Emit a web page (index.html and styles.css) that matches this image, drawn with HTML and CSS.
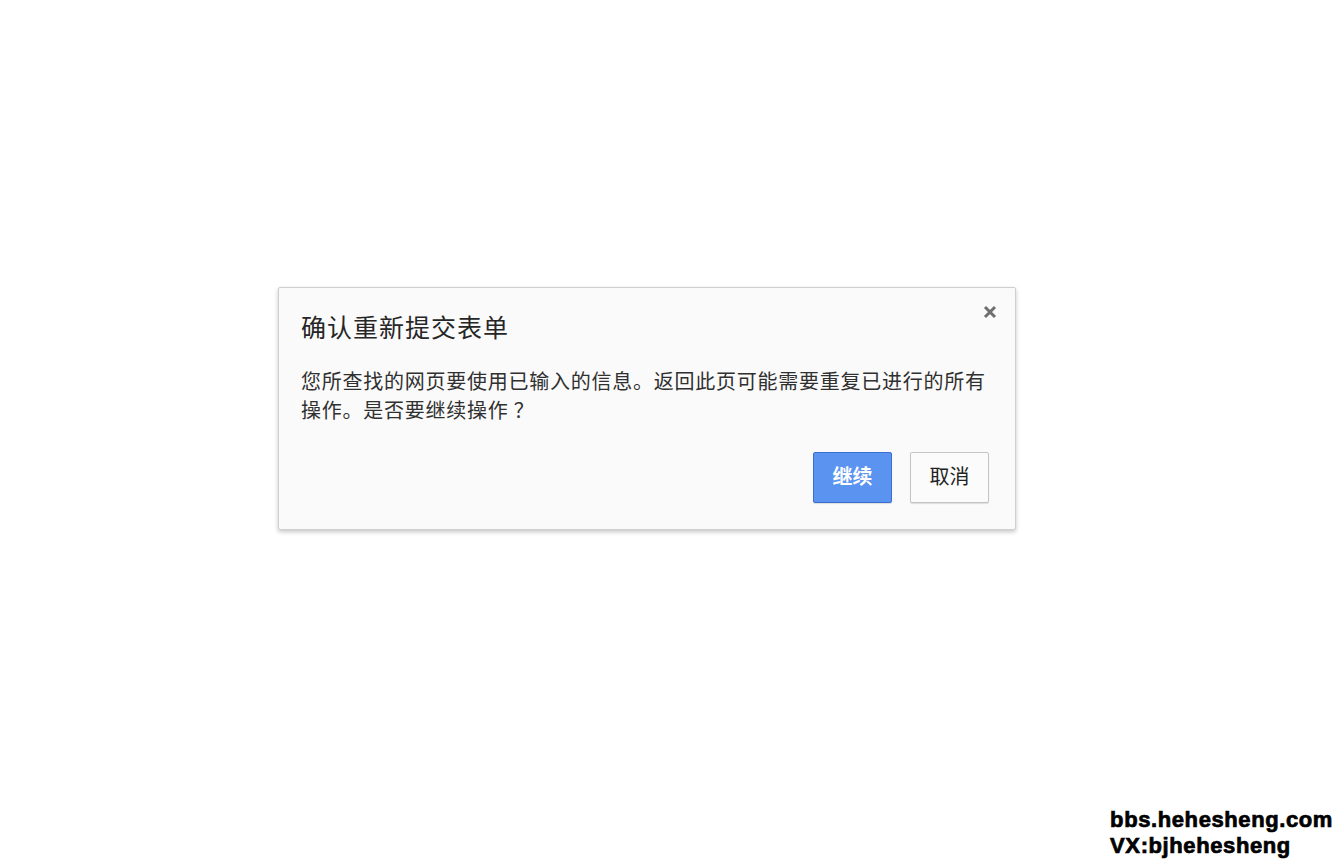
FILE: index.html
```html
<!DOCTYPE html>
<html>
<head>
  <title>确认重新提交表单</title>
  <meta charset="utf-8">
  <link rel="stylesheet" href="styles.css">
</head>
<body>
  <div class="page">
    <div class="dialog">
      <button class="close-btn" aria-label="关闭">
        <svg width="14" height="14" viewBox="0 0 14 14">
          <path d="M2 2 L12 12 M12 2 L2 12" stroke="#6f6f6f" stroke-width="3" stroke-linecap="butt" fill="none"/>
        </svg>
      </button>
      <h1 class="dialog-title">确认重新提交表单</h1>
      <p class="dialog-text">您所查找的网页要使用已输入的信息。返回此页可能需要重复已进行的所有操作。是否要继续操作 ？</p>
      <div class="dialog-actions">
        <button class="btn btn-primary">继续</button>
        <button class="btn">取消</button>
      </div>
    </div>
  </div>

  <div class="watermark">
    <div>bbs.hehesheng.com</div>
    <div>VX:bjhehesheng</div>
  </div>
</body>
</html>
```

FILE: styles.css
```css
html, body {
  margin: 0;
  background: #ffffff;
}
body {
  font-family: "Noto Sans CJK SC", "Noto Sans", sans-serif;
  color: #222;
  width: 1337px;
  height: 863px;
  overflow: hidden;
}
/* page wrapper, places the dialog */
.page {
  display: flex;
  padding: 287px 0 0 278px;
}
.dialog {
  position: relative;
  box-sizing: border-box;
  width: 738px;
  height: 243px;
  background: #fafafa;
  border: 1px solid #cfcfcf;
  border-radius: 2px;
  box-shadow: 0 2px 4px rgba(0, 0, 0, 0.22);
  padding: 21px 26px 0 22px;
  display: flex;
  flex-direction: column;
}
.close-btn {
  position: absolute;
  top: 17px;
  right: 18px;
  width: 14px;
  height: 14px;
  padding: 0;
  border: none;
  background: none;
  cursor: pointer;
  line-height: 0;
}
.dialog-title {
  margin: 0;
  font-size: 25px;
  font-weight: normal;
  line-height: 34px;
  color: #262626;
  letter-spacing: 1px;
}
.dialog-text {
  margin: 23px 0 0 0;
  font-size: 20px;
  line-height: 29px;
  color: #303030;
  letter-spacing: 0.75px;
  width: 700px;
}
.dialog-actions {
  display: flex;
  justify-content: flex-end;
  gap: 18px;
  margin-top: 28px;
}
.btn {
  box-sizing: border-box;
  width: 79px;
  height: 51px;
  font-family: "Noto Sans CJK SC", sans-serif;
  font-size: 20px;
  color: #222;
  background: #fbfbfb;
  border: 1px solid #c4c4c4;
  border-radius: 2px;
  box-shadow: 0 1px 1px rgba(0, 0, 0, 0.12);
  padding: 0 0 5px 0;
  cursor: pointer;
}
.btn-primary {
  background: #5b93f1;
  border-color: #3a6fd0;
  color: #ffffff;
  font-weight: bold;
}
/* overlay watermark */
.watermark {
  position: absolute;
  right: 4px;
  bottom: 4px;
  font-family: "Liberation Sans", Arial, sans-serif;
  font-weight: 900;
  font-size: 22px;
  line-height: 26px;
  letter-spacing: 0.6px;
  -webkit-text-stroke: 0.7px #000;
  color: #000;
}
```
